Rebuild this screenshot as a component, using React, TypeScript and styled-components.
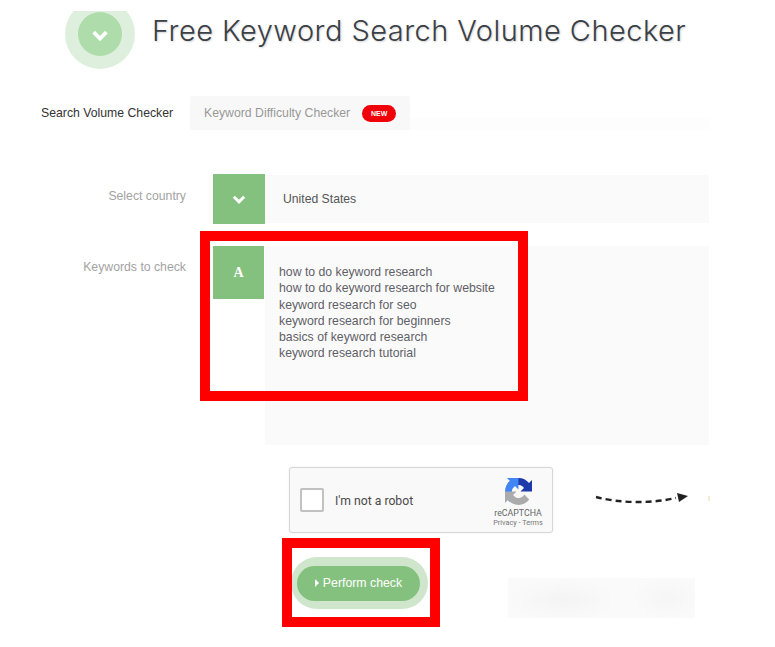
import React from "react";
import styled, { createGlobalStyle } from "styled-components";

const Global = createGlobalStyle`
  html, body { margin: 0; padding: 0; background: #fff; }
  body { font-family: "Liberation Sans", Arial, sans-serif; }
`;

const Page = styled.div`
  position: relative;
  width: 775px;
  height: 647px;
  overflow: hidden;
  padding-top: 11px;
  box-sizing: border-box;
  background: #fff;
`;

const Header = styled.header`
  display: flex;
  align-items: flex-start;
  height: 58px;
  padding-left: 65px;
`;

const BadgeClip = styled.div`
  width: 70px;
  height: 58px;
  overflow: hidden;
  flex: none;
`;

const BadgeOuter = styled.div`
  width: 70px;
  height: 70px;
  margin-top: -12px;
  border-radius: 50%;
  background: #def0dd;
  display: flex;
  align-items: center;
  justify-content: center;
`;

const BadgeInner = styled.div`
  width: 44px;
  height: 44px;
  border-radius: 50%;
  background: #aedcaa;
  display: flex;
  align-items: center;
  justify-content: center;
  padding-top: 2px;
  box-sizing: border-box;
`;

const Title = styled.h1`
  margin: 2px 0 0 17px;
  font-family: Inter, "Open Sans", sans-serif;
  font-weight: 300;
  font-size: 29px;
  letter-spacing: 0.45px;
  line-height: 36px;
  color: #3b3f46;
  white-space: nowrap;
  text-shadow: 1px 1px 2px rgba(0, 0, 0, 0.18);
`;

const Tabs = styled.nav`
  display: flex;
  width: 710px;
  height: 34px;
  margin-top: 27px;
`;

const Tab = styled.div<{ $active?: boolean }>`
  display: flex;
  align-items: center;
  box-sizing: border-box;
  flex: none;
  font-size: 12.25px;
  padding-left: ${(p) => (p.$active ? "41px" : "14px")};
  width: ${(p) => (p.$active ? "190px" : "220px")};
  color: ${(p) => (p.$active ? "#333" : "#999")};
  background: ${(p) => (p.$active ? "transparent" : "#f8f8f8")};
  border-radius: 2px 2px 0 0;
`;

const TabRest = styled.div`
  flex: 1;
  background: linear-gradient(to bottom, #fff 0, #fff 22px, #fdfdfd 22px);
`;

const NewBadge = styled.span`
  margin-left: 12px;
  width: 34px;
  height: 17px;
  border-radius: 9px;
  background: #f00008;
  color: #fff;
  font-size: 7px;
  font-weight: 700;
  display: flex;
  align-items: center;
  justify-content: center;
`;

const FormRow = styled.div<{ $top: number }>`
  display: flex;
  width: 709px;
  margin-top: ${(p) => p.$top}px;
`;

const Label = styled.label<{ $offset: number }>`
  width: 186px;
  flex: none;
  margin-right: 27px;
  padding-top: ${(p) => p.$offset}px;
  text-align: right;
  font-size: 12.25px;
  line-height: 14px;
  color: #a3a3a3;
`;

const IconBox = styled.div<{ $h: number; $w: number }>`
  width: ${(p) => p.$w}px;
  height: ${(p) => p.$h}px;
  margin-right: ${(p) => 52 - p.$w}px;
  flex: none;
  background: #85c17e;
  color: #fff;
  display: flex;
  align-items: center;
  justify-content: center;
  font-family: "Liberation Serif", serif;
  font-weight: 700;
  font-size: 14px;
`;

const SelectField = styled.div`
  flex: 1;
  height: 48px;
  margin-top: 1px;
  background: #fafafa;
  display: flex;
  align-items: center;
  padding-left: 18px;
  font-size: 12.2px;
  color: #555;
`;

const KeywordField = styled.div`
  flex: 1;
  height: 199px;
  box-sizing: border-box;
  background: #fafafa;
  padding: 18px 14px;
  font-size: 12.25px;
  line-height: 16.3px;
  color: #5f6066;
  white-space: pre-line;
`;

const CaptchaRow = styled.div`
  display: flex;
  align-items: center;
  width: 720px;
  margin: 22px 0 0 289px;
`;

const Captcha = styled.div`
  box-sizing: border-box;
  width: 264px;
  height: 66px;
  flex: none;
  background: #f9f9f9;
  border: 1px solid #d6d6d6;
  border-radius: 3px;
  box-shadow: 0 0 3px rgba(0, 0, 0, 0.06);
  display: flex;
  align-items: center;
  padding-left: 10px;
  font-family: Roboto, sans-serif;
`;

const CheckBox = styled.div`
  width: 24px;
  height: 24px;
  flex: none;
  box-sizing: border-box;
  background: #fff;
  border: 2px solid #c1c1c1;
  border-radius: 2px;
`;

const CaptchaText = styled.span`
  margin: 1px 0 0 11px;
  font-size: 12.2px;
  color: #4a4a4a;
`;

const CaptchaBrand = styled.div`
  align-self: flex-start;
  margin: 10px 4px 0 auto;
  width: 60px;
  display: flex;
  flex-direction: column;
  align-items: center;
  color: #666;
`;

const LogoArt = styled.svg`
  filter: blur(0.4px);
`;

const BrandName = styled.span`
  font-size: 8.8px;
  line-height: 10px;
  margin-top: 3px;
`;

const BrandLinks = styled.span`
  font-size: 7.3px;
  line-height: 10px;
  color: #777;
  white-space: nowrap;
`;

const ArrowArt = styled.svg`
  margin-left: 41px;
  flex: none;
`;

const ActionRow = styled.div`
  display: flex;
  align-items: flex-start;
  margin: 24px 0 0 291px;
`;

const Halo = styled.div`
  box-sizing: border-box;
  width: 137px;
  height: 52px;
  flex: none;
  padding: 9px 8px 8px 6px;
  border-radius: 26px;
  background: #cfe6cc;
`;

const Button = styled.button`
  width: 100%;
  height: 100%;
  border: 0;
  padding: 0 0 2px;
  border-radius: 18px;
  background: #85c17e;
  color: #fff;
  font-family: "Liberation Sans", sans-serif;
  font-size: 12.3px;
  display: flex;
  align-items: center;
  justify-content: center;
  gap: 4px;
`;

const BlurClip = styled.div`
  width: 187px;
  height: 40px;
  margin: 21px 0 0 80px;
  flex: none;
  overflow: hidden;
  background: #fafafa;
`;

const BlurSmear = styled.div`
  width: 100%;
  height: 100%;
  filter: blur(5px);
  background:
    radial-gradient(ellipse 50px 16px at 30% 55%, #f2f2f2, transparent),
    radial-gradient(ellipse 30px 16px at 85% 50%, #f4f4f4, transparent);
`;

const RedFrame = styled.div<{ $x: number; $y: number; $w: number; $h: number }>`
  position: absolute;
  left: ${(p) => p.$x}px;
  top: ${(p) => p.$y}px;
  width: ${(p) => p.$w}px;
  height: ${(p) => p.$h}px;
  box-sizing: border-box;
  border: 10px solid #ff0000;
  pointer-events: none;
`;

const Chevron = ({ size = 16 }: { size?: number }) => (
  <svg width={size} height={size} viewBox="0 0 14 14" fill="none">
    <path d="M2.5 5 L7 9.5 L11.5 5" stroke="#fff" strokeWidth="2.6" />
  </svg>
);

const CaptchaLogo = () => (
  <LogoArt width="27" height="27" viewBox="0 0 64 64">
    <path d="M64 31.955l-.033-1.37V4.687l-7.16 7.16C50.948 4.674 42.033.093 32.05.093c-10.4 0-19.622 4.96-25.458 12.64l11.736 11.86a15.55 15.55 0 0 1 4.754-5.334c2.05-1.6 4.952-2.906 8.968-2.906.485 0 .86.057 1.135.163 4.976.393 9.288 3.14 11.828 7.124l-8.307 8.307L64 31.953" fill="#1c3aa9" />
    <path d="M31.862 0l-1.37.033H4.594l7.16 7.16C4.58 13.052 0 21.967 0 31.95c0 10.4 4.96 19.622 12.64 25.458L24.5 45.672a15.55 15.55 0 0 1-5.334-4.754c-1.6-2.05-2.906-4.952-2.906-8.968 0-.485.057-.86.163-1.135.393-4.976 3.14-9.288 7.124-11.828l8.307 8.307L31.86 0" fill="#4285f4" />
    <path d="M0 31.95l.033 1.37v25.898l7.16-7.16C13.052 59.23 21.967 63.81 31.95 63.81c10.4 0 19.622-4.96 25.458-12.64L45.672 39.31a15.55 15.55 0 0 1-4.754 5.334c-2.05 1.6-4.952 2.906-8.968 2.906-.485 0-.86-.057-1.135-.163-4.976-.393-9.288-3.14-11.828-7.124l8.307-8.307L0 31.95" fill="#ababab" />
  </LogoArt>
);

const keywords = [
  "how to do keyword research",
  "how to do keyword research for website",
  "keyword research for seo",
  "keyword research for beginners",
  "basics of keyword research",
  "keyword research tutorial",
].join("\n");

export default function App() {
  return (
    <Page>
      <Global />
      <Header>
        <BadgeClip>
          <BadgeOuter>
            <BadgeInner>
              <Chevron size={20} />
            </BadgeInner>
          </BadgeOuter>
        </BadgeClip>
        <Title>Free Keyword Search Volume Checker</Title>
      </Header>
      <Tabs>
        <Tab $active>Search Volume Checker</Tab>
        <Tab>
          Keyword Difficulty Checker
          <NewBadge>NEW</NewBadge>
        </Tab>
        <TabRest />
      </Tabs>
      <FormRow $top={44}>
        <Label $offset={15}>Select country</Label>
        <IconBox $w={52} $h={50}>
          <Chevron />
        </IconBox>
        <SelectField>United States</SelectField>
      </FormRow>
      <FormRow $top={22}>
        <Label $offset={14}>Keywords to check</Label>
        <IconBox $w={51} $h={53}>A</IconBox>
        <KeywordField>{keywords}</KeywordField>
      </FormRow>
      <CaptchaRow>
        <Captcha>
          <CheckBox />
          <CaptchaText>I'm not a robot</CaptchaText>
          <CaptchaBrand>
            <CaptchaLogo />
            <BrandName>reCAPTCHA</BrandName>
            <BrandLinks>Privacy - Terms</BrandLinks>
          </CaptchaBrand>
        </Captcha>
        <ArrowArt width="116" height="18" viewBox="0 0 116 18" fill="none">
          <path d="M2 6 C25 12 55 13 82 7" stroke="#222" strokeWidth="2.4" strokeDasharray="6 4" />
          <path d="M83 2 L94 5 L85 11 Z" fill="#222" />
          <rect x="114" y="5" width="2" height="5" fill="#f6ead6" />
        </ArrowArt>
      </CaptchaRow>
      <ActionRow>
        <Halo>
          <Button>
            <svg width="4" height="8" viewBox="0 0 4 8"><path d="M0 0 L4 4 L0 8 Z" fill="#fff" /></svg>
            Perform check
          </Button>
        </Halo>
        <BlurClip>
          <BlurSmear />
        </BlurClip>
      </ActionRow>
      <RedFrame $x={200} $y={231} $w={328} $h={170} />
      <RedFrame $x={282} $y={538} $w={158} $h={89} />
    </Page>
  );
}
